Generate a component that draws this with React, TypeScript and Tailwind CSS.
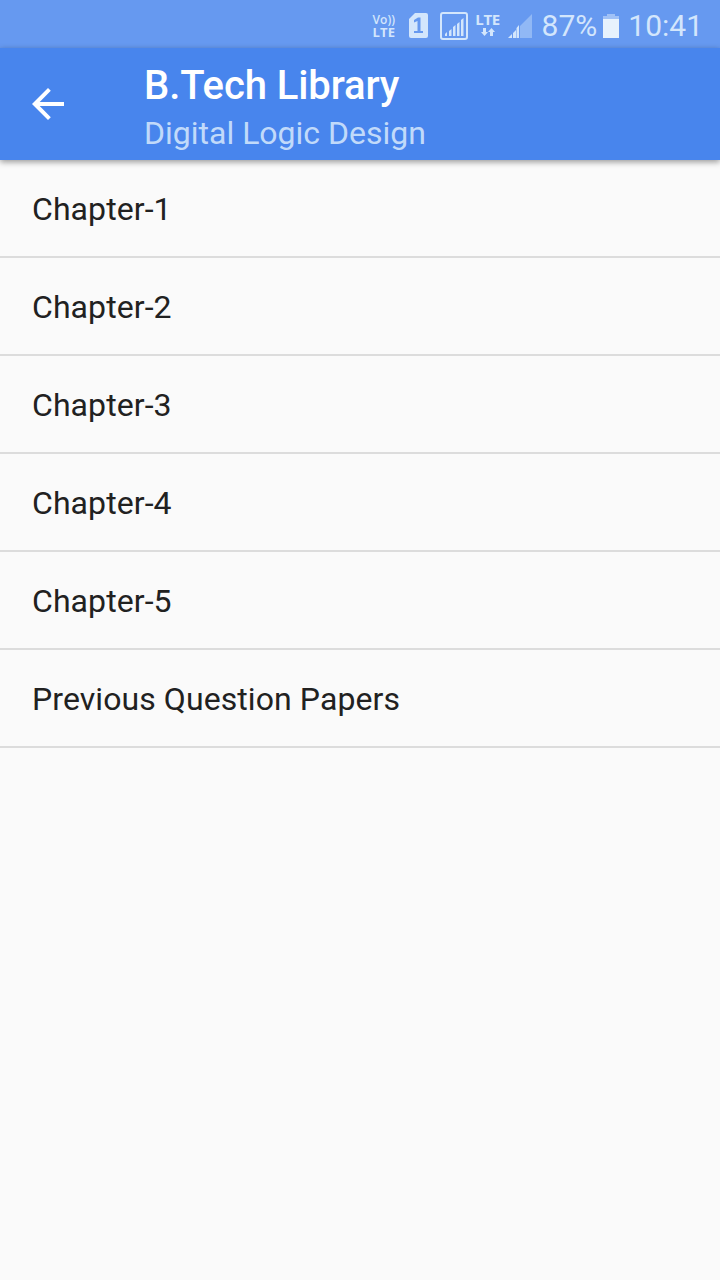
const chapters = [
  'Chapter-1',
  'Chapter-2',
  'Chapter-3',
  'Chapter-4',
  'Chapter-5',
  'Previous Question Papers',
];

function StatusBar() {
  return (
    <div className="flex h-12 items-center justify-end bg-[#6699f0] pt-[3px] pr-[17px] text-[#d3e6fc]">
      {/* VoLTE */}
      <div className="mr-3 flex w-6 flex-col font-['Open_Sans',sans-serif] font-bold">
        <span className="text-[12px] leading-[13px] font-semibold whitespace-nowrap">Vo))</span>
        <span className="text-[13px] leading-[13px] tracking-[0.2px] whitespace-nowrap">LTE</span>
      </div>
      {/* SIM slot */}
      <svg className="mr-3 h-[25px] w-[19px]" viewBox="0 0 19 25">
        <path d="M6 0H17Q19 0 19 2V23Q19 25 17 25H2Q0 25 0 23V6Z" fill="currentColor" />
        <path d="M5 7L9 4.500H11.500V18H14V20H5V18H8.500V8L5 9.500Z" fill="#6699f0" />
      </svg>
      <svg className="mr-2 h-7 w-7" viewBox="0 0 28 28" fill="currentColor">
        <rect x="1" y="1" width="26" height="26" rx="2" fill="none" stroke="currentColor" strokeWidth="2" />
        <path d="M5 24v-2l2-2v4zM9 24v-5l2.500-2v7zM13 24v-9l2.500-2v11zM17 24V12l2.500-2v14zM21 24V8l2.500-2v18z" />
      </svg>
      <div className="mr-2 flex w-6 -translate-y-0.5 flex-col items-center font-['Open_Sans',sans-serif] text-[15px] leading-[17px] font-bold">
        <span className="tracking-[-0.3px]">LTE</span>
        <svg className="h-2 w-[14px]" viewBox="0 0 14 8" fill="currentColor">
          <path d="M2 0h3v4h2L3.500 8 0 4h2zM9 8h3V4h2L10.500 0 7 4h2z" />
        </svg>
      </div>
      <svg className="mr-2.5 h-6 w-6" viewBox="0 0 24 24" fill="currentColor">
        <path d="M12 12L24 0V24H12Z" opacity="0.4" />
        <path d="M0 24L4 20V24ZM5 24V19L8 16V24ZM8.500 24V14L11 11V24Z" />
      </svg>
      <span className="text-[30px]">87%</span>
      <svg className="mr-[9px] ml-1.5 h-6 w-4" viewBox="0 0 16 24" fill="#e7f2fd">
        <path d="M4 0h8v2h4v3H0V2h4z" opacity="0.45" />
        <path d="M0 5h16v19H0z" />
      </svg>
      <span className="text-[30px]">10:41</span>
    </div>
  );
}

function AppBar() {
  return (
    <header className="flex h-28 items-center bg-[#4885ed] pl-8 shadow-[0_2px_6px_rgba(0,0,0,0.4)]">
      <svg className="mr-20 h-8 w-8" viewBox="0 0 32 32">
        <path d="M32 14H7.7L18.8 2.8L16 0L0 16L16 32L18.8 29.2L7.7 18H32Z" fill="white" />
      </svg>
      <div className="pt-2.5">
        <h1 className="text-[40px] leading-[48px] font-medium tracking-[-0.1px] text-white">B.Tech Library</h1>
        <p className="text-[32px] leading-[47px] text-[#c1dafa]">Digital Logic Design</p>
      </div>
    </header>
  );
}

export default function App() {
  return (
    <div className="min-h-screen bg-[#fafafa] font-['Roboto',sans-serif]">
      <StatusBar />
      <AppBar />
      <ul>
        {chapters.map((chapter) => (
          <li
            key={chapter}
            className="flex h-[98px] items-center border-b-2 border-[#dcdcdc] px-8 pt-0.5 text-[32px] tracking-[0.08px] text-[#212121]"
          >
            {chapter}
          </li>
        ))}
      </ul>
    </div>
  );
}
